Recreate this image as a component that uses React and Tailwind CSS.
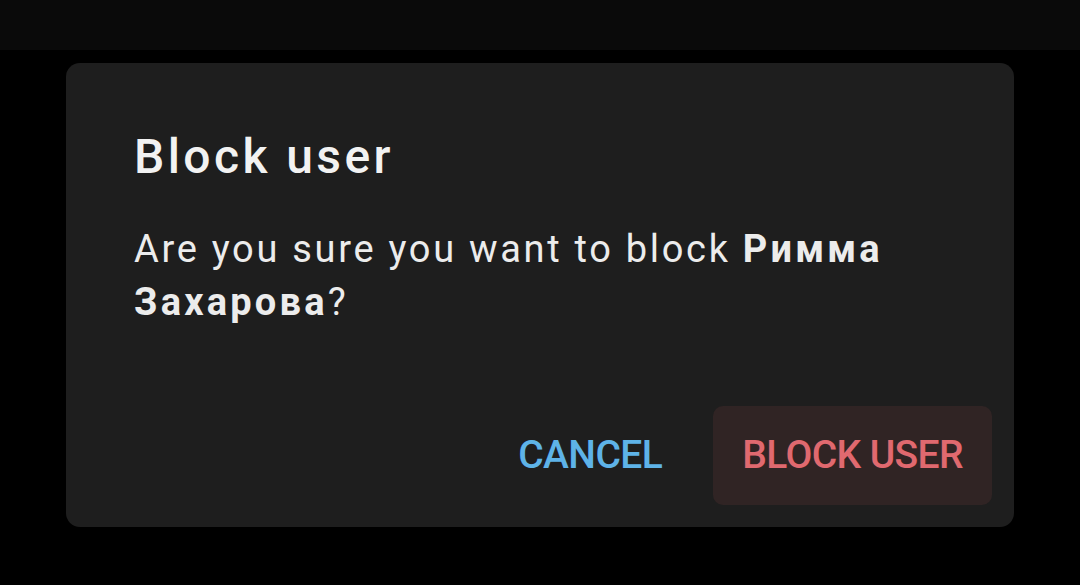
import React from "react";

const App = () => {
  return (
    <div className="w-[1080px] h-[585px] bg-black flex flex-col overflow-hidden" style={{ fontFamily: "Roboto, 'Noto Sans', sans-serif" }}>
      {/* top app bar, dimmed */}
      <div className="h-[50px] bg-[#0a0a0a] shrink-0" />

      <div className="px-[66px] pt-[13px]">
        <div className="bg-[#1e1e1e] rounded-[14px] h-[464px] flex flex-col pt-[66px] pl-[68px] pr-[22px] pb-[22px]">
          <h2 className="text-[48px] leading-[56px] font-medium tracking-[3.4px] text-[#f2f2f2]">Block user</h2>
          <p className="mt-[38px] text-[38px] leading-[53px] tracking-[2.7px] text-[#ececec] pr-[40px]">
            Are you sure you want to block <span className="font-bold tracking-[3.2px]">Римма Захарова</span>?
          </p>

          <div className="mt-auto flex justify-end gap-[22px]">
            <button className="h-[99px] px-[29px] rounded-[10px] text-[39px] font-medium tracking-[-0.6px] text-[#5eb3e8]">
              CANCEL
            </button>
            <button className="h-[99px] px-[29px] rounded-[10px] bg-[#302424] text-[39px] font-medium tracking-[-0.6px] text-[#e0696f]">
              BLOCK USER
            </button>
          </div>
        </div>
      </div>
    </div>
  );
};

export default App;
